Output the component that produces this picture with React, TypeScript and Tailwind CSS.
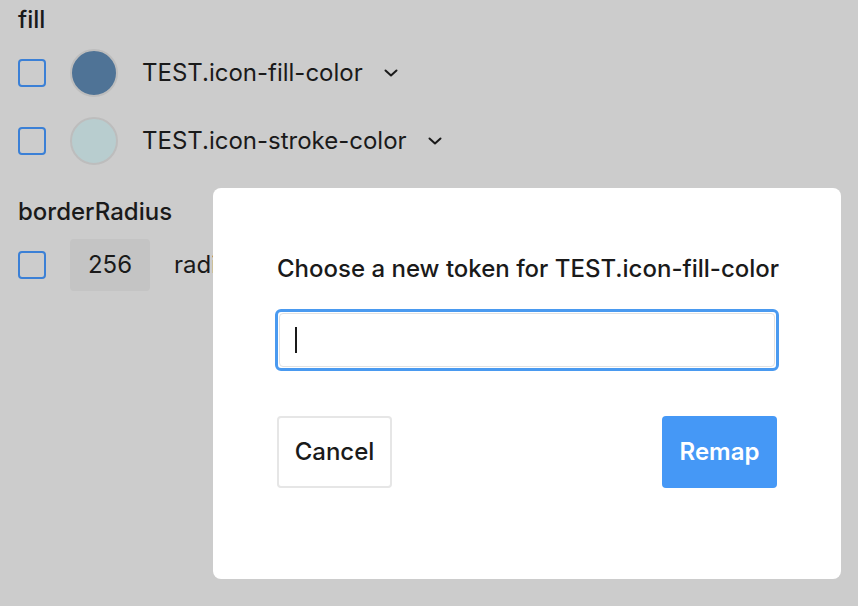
function Checkbox() {
  return <div className="w-[28px] h-[28px] rounded-[4px] border-2 border-[#3b80d6] shrink-0" />;
}

function Chevron() {
  return (
    <svg width="14" height="8" viewBox="0 0 14 8" fill="none" className="ml-[21px] shrink-0">
      <path d="M1.5 1.5 L7 6.5 L12.5 1.5" stroke="#1a1a1a" strokeWidth="2" strokeLinecap="round" strokeLinejoin="round" />
    </svg>
  );
}

function TokenRow({ color, label }: { color: string; label: string }) {
  return (
    <div className="flex items-center h-[48px]">
      <Checkbox />
      <div
        className="ml-[24px] w-[48px] h-[48px] rounded-full border-2 border-[#bdbdbd] shrink-0"
        style={{ backgroundColor: color }}
      />
      <span className="ml-[24px] text-[24px] leading-[28px] text-[#1a1a1a]">{label}</span>
      <Chevron />
    </div>
  );
}

export default function App() {
  return (
    <div
      className="relative w-[858px] h-[606px] bg-[#cccccc] overflow-hidden"
      style={{ fontFamily: 'Inter, "Noto Sans", sans-serif' }}
    >
      <div className="pl-[18px] pt-[6px]">
        <div className="text-[24px] font-medium text-[#1a1a1a] leading-[28px]">fill</div>
        <div className="mt-[15px] flex flex-col gap-[20px]">
          <TokenRow color="#4f7396" label="TEST.icon-fill-color" />
          <TokenRow color="#b8cdcf" label="TEST.icon-stroke-color" />
        </div>
        <div className="mt-[33px] text-[24px] font-medium text-[#1a1a1a] leading-[28px]">borderRadius</div>
        <div className="mt-[13px] flex items-center h-[52px]">
          <Checkbox />
          <div className="ml-[24px] w-[80px] h-[52px] rounded-[4px] bg-[#c4c4c4] flex items-center justify-center text-[24px] text-[#1a1a1a]">
            256
          </div>
          <span className="ml-[24px] text-[24px] text-[#1a1a1a]">radius</span>
        </div>
      </div>

      <div className="absolute left-[213px] top-[188px] w-[628px] h-[391px] bg-white rounded-[8px] px-[64px] pt-[67px]">
        <div className="text-[24px] font-medium text-[#1a1a1a] leading-[28px] whitespace-nowrap">
          Choose a new token for TEST.icon-fill-color
        </div>
        <div className="mt-[26px] -mx-[2px] h-[62px] rounded-[6px] border-[3px] border-[#4a9af0] p-[1px]">
          <div className="h-full rounded-[4px] border border-[#e2e2e2] flex items-center pl-[15px]">
            <div className="w-[2px] h-[26px] bg-[#1a1a1a]" />
          </div>
        </div>
        <div className="mt-[45px] flex justify-between">
          <button className="w-[115px] h-[72px] rounded-[4px] border-2 border-[#e6e6e6] bg-white text-[24px] font-medium text-[#1a1a1a]">
            Cancel
          </button>
          <button className="w-[115px] h-[72px] rounded-[4px] bg-[#4598f6] text-[24px] font-semibold text-white">
            Remap
          </button>
        </div>
      </div>
    </div>
  );
}
